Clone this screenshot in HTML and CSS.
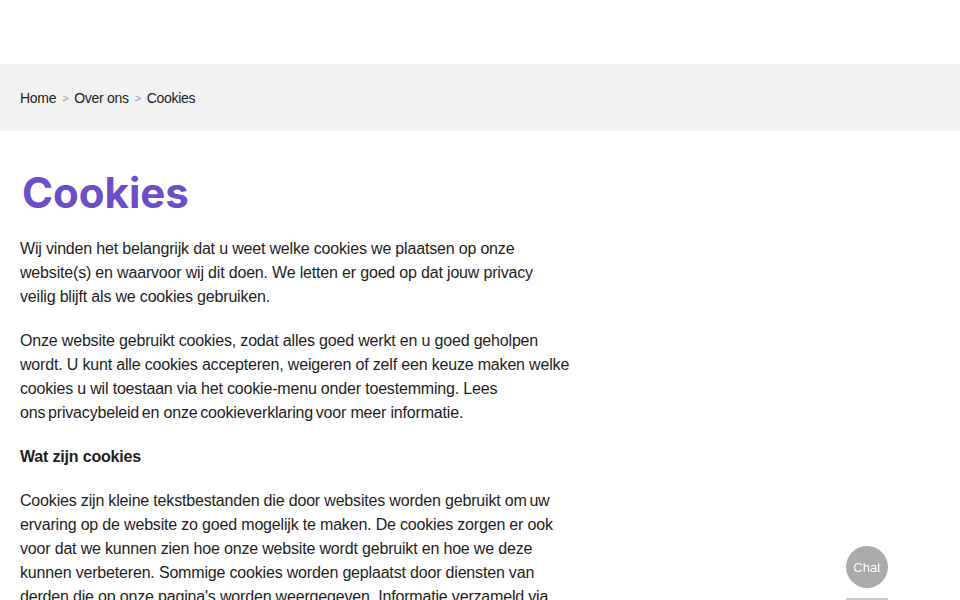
FILE: index.html
```html
<!DOCTYPE html>
<html lang="nl">
<head>
<meta charset="utf-8">
<title>Cookies</title>
<link rel="stylesheet" href="styles.css">
</head>
<body>
<header class="site-header"></header>
<nav class="breadcrumb">
  <a href="#" class="crumb">Home</a><span class="sep">&gt;</span><a href="#" class="crumb">Over ons</a><span class="sep">&gt;</span><span class="crumb current">Cookies</span>
</nav>
<main class="content">
  <h1 class="title">Cookies</h1>
  <p>Wij vinden het belangrijk dat u weet welke cookies we plaatsen op onze website(s) en waarvoor wij dit doen. We letten er goed op dat jouw privacy veilig blijft als we cookies gebruiken.</p>
  <p>Onze website gebruikt cookies, zodat alles goed werkt en u goed geholpen wordt. U kunt alle cookies accepteren, weigeren of zelf een keuze maken welke cookies u wil toestaan via het cookie-menu onder toestemming. Lees <span class="nobr">ons <a href="#" class="inline-link">privacybeleid</a> en</span> <span class="nobr">onze <a href="#" class="inline-link">cookieverklaring</a> voor</span> meer informatie.</p>
  <h3 class="subhead">Wat zijn cookies</h3>
  <p>Cookies zijn kleine tekstbestanden die door websites worden gebruikt <span class="nobr">om uw</span> ervaring op de website zo goed mogelijk te maken. De cookies zorgen er ook voor dat we kunnen zien hoe onze website wordt gebruikt en hoe we deze kunnen verbeteren. Sommige cookies worden geplaatst door diensten van derden die op onze pagina's worden weergegeven. Informatie verzameld via deze cookies wordt gedeeld met deze derden.</p>
</main>
<button class="chat">Chat</button>
<div class="chat-bar"></div>
</body>
</html>
```
FILE: styles.css
```css
html, body {
  margin: 0;
  padding: 0;
  background: #fff;
  overflow: hidden;
  height: 600px;
}
body {
  font-family: "Liberation Sans", Arial, sans-serif;
  color: #1e1e1e;
  font-size: 16px;
  line-height: 24px;
  letter-spacing: -0.18px;
}
.site-header {
  height: 64px;
  background: #fff;
}
.breadcrumb {
  height: 67px;
  background: #f2f2f2;
  display: flex;
  align-items: center;
  padding: 0 20px;
  font-size: 14px;
  line-height: 20px;
  letter-spacing: -0.3px;
}
.crumb {
  color: #222;
  text-decoration: none;
}
.sep {
  color: #999;
  font-size: 11px;
  margin: 0 6px;
}
.content {
  padding: 34px 20px 0;
  max-width: 550px;
}
.title {
  font-family: Inter, "Liberation Sans", sans-serif;
  font-weight: 700;
  font-size: 42px;
  line-height: 56px;
  color: #6a4fc8;
  margin: 0 0 16px 2px;
  letter-spacing: 0;
}
.content p {
  margin: 0 0 20px;
}
.subhead {
  font-size: 16px;
  line-height: 24px;
  font-weight: 700;
  margin: 1px 0 20px;
}
.nobr {
  white-space: nowrap;
  word-spacing: -1.5px;
}
.inline-link {
  color: inherit;
  text-decoration: none;
}
.chat {
  position: fixed;
  left: 846px;
  top: 546px;
  width: 42px;
  height: 42px;
  border-radius: 50%;
  border: none;
  background: #aaaaaa;
  color: #fff;
  font-family: "Liberation Sans", Arial, sans-serif;
  font-size: 13px;
  padding: 0;
}
.chat-bar {
  position: fixed;
  left: 846px;
  top: 598px;
  width: 42px;
  height: 2px;
  background: #c8c8c8;
}
```
